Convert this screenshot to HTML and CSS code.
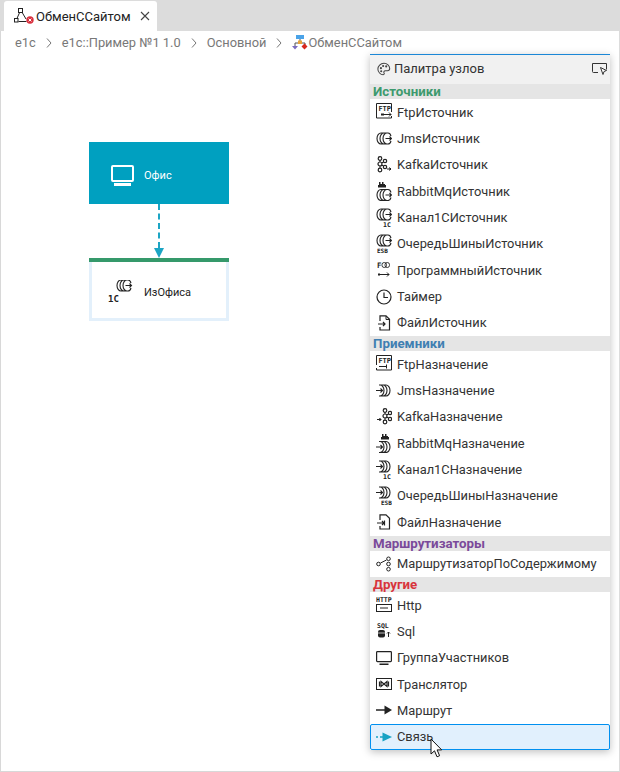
FILE: index.html
```html
<!DOCTYPE html>
<html lang="ru">
<head>
    <meta charset="UTF-8">
    <title>ОбменССайтом</title>
    <link rel="stylesheet" href="styles.css">
</head>
<body>
    <svg class="defs" width="0" height="0">
        <defs>
            <g id="coil-out" fill="none" stroke="#222" stroke-width="1.100">
                <path d="M5 2a4 5.500 0 0 0 0 11M8 2a4 5.500 0 0 0 0 11M11 2a4 5.500 0 0 0 0 11M5 2h7c1.500 0 2.500 1 3 3M5 13h7c1.500 0 2.500-1 3-3"/>
                <path d="M9.500 7.500h6M13.500 5.500l2 2-2 2"/>
            </g>
            <g id="coil-in" fill="none" stroke="#222" stroke-width="1.100">
                <path d="M10 2a4 5.500 0 0 1 0 11M7 2a4 5.500 0 0 1 0 11M4 2a4 5.500 0 0 1 0 11M3 2h7M3 13h7"/>
                <path d="M0 7.500h6.500M4.500 5.500l2 2-2 2"/>
            </g>
        </defs>
    </svg>

    <div class="window">
        <div class="tabbar">
            <div class="tab">
                <svg class="tab-icon" width="20" height="18" viewBox="0 0 20 18">
                    <path d="M6.500 3.500L2.500 12.500M7 3.500l5 8.500M4.500 14.500h8" fill="none" stroke="#222"/>
                    <rect x="4.500" y="1.500" width="4" height="4" fill="#fff" stroke="#222"/>
                    <rect x="0.500" y="11.500" width="3.500" height="3.500" fill="#fff" stroke="#222"/>
                    <circle cx="16" cy="13" r="3.700" fill="#d9303e"/>
                    <path d="M14.600 11.600l2.800 2.800M17.400 11.600l-2.800 2.800" stroke="#fff"/>
                </svg>
                <span>ОбменССайтом</span>
                <svg class="tab-close" width="10" height="10" viewBox="0 0 10 10">
                    <path d="M1 1l8 8M9 1l-8 8" stroke="#444" stroke-width="1.100"/>
                </svg>
            </div>
        </div>

        <div class="crumbs">
            <span>e1c</span>
            <svg class="crumb-sep" width="6" height="10" viewBox="0 0 6 10"><path d="M1 .5l4 4.500-4 4.500" fill="none" stroke="#777"/></svg>
            <span>e1c::Пример №1 1.0</span>
            <svg class="crumb-sep" width="6" height="10" viewBox="0 0 6 10"><path d="M1 .5l4 4.500-4 4.500" fill="none" stroke="#777"/></svg>
            <span>Основной</span>
            <svg class="crumb-sep" width="6" height="10" viewBox="0 0 6 10"><path d="M1 .5l4 4.500-4 4.500" fill="none" stroke="#777"/></svg>
            <svg class="crumb-icon" width="16" height="16" viewBox="0 0 16 16">
                <path d="M8 4v3M3 11V8h10v3" fill="none" stroke="#555"/>
                <rect x="4" y="0" width="8" height="4" fill="#4aa3e8"/>
                <rect x="6" y="5.500" width="4" height="3.500" fill="#e8a33a"/>
                <path d="M0 11h6L3 14.500z" fill="#7a6cc0"/>
                <path d="M12.500 8.500l3 3-3 3-3-3z" fill="#d8261c"/>
            </svg>
            <span class="crumb-last">ОбменССайтом</span>
        </div>

        <div class="canvas">
            <div class="node node-group">
                <svg class="node-icon" width="24" height="22" viewBox="0 0 24 22">
                    <rect x="1" y="1" width="21" height="15" rx="1" fill="none" stroke="#fff" stroke-width="2"/>
                    <rect x="3" y="18" width="17" height="3" fill="#fff"/>
                </svg>
                <span>Офис</span>
            </div>
            <div class="link">
                <div class="link-line"></div>
                <div class="link-head"></div>
            </div>
            <div class="node node-source">
                <svg class="node-icon" width="26" height="24" viewBox="0 0 26 24">
                    <use href="#coil-out" x="9" y="-2"/>
                    <text class="mini" x="1" y="22" font-size="9">1С</text>
                </svg>
                <span>ИзОфиса</span>
            </div>

            <div class="palette">
                <div class="palette-head">
                    <svg width="14" height="14" viewBox="0 0 16 16">
                        <path d="M8 1.500C4 1.500 1 4.500 1 8s3 6.500 6 6.500c1.500 0 1.500-1.500 1-2.200-.6-1 0-2.300 1.500-2.300h2.500c1.500 0 2.500-1 2.500-2.500 0-3.500-3-6-6.500-6z" fill="none" stroke="#444" stroke-width="1.200"/>
                        <circle cx="4.500" cy="7" r="1.200" fill="#444"/><circle cx="7" cy="4.500" r="1.200" fill="#444"/><circle cx="10.500" cy="5" r="1.200" fill="#444"/><circle cx="4.800" cy="10.500" r="1.200" fill="#444"/>
                    </svg>
                    <span class="palette-title">Палитра узлов</span>
                    <svg class="palette-pin" width="16" height="14" viewBox="0 0 16 14">
                        <path d="M6 10.500H1.500a1 1 0 0 1-1-1v-8h14v6" fill="none" stroke="#333"/>
                        <path d="M8.500 5.500l6 3-2.500 1-1 3z" fill="#fff" stroke="#333"/>
                    </svg>
                </div>

                <div class="group group-sources">Источники</div>
                <div class="item">
                    <svg width="16" height="18" viewBox="0 0 16 18"><path d="M15.500 9V.5H.5V15h15v-2" fill="none" stroke="#222"/><text class="mini" x="2.400" y="7.500" font-size="7">FTP</text><path d="M7 11.500h8M13 9.500l2 2-2 2" fill="none" stroke="#222"/><rect x="5" y="10.500" width="3" height="2" fill="#222"/></svg>
                    <span>FtpИсточник</span>
                </div>
                <div class="item">
                    <svg width="16" height="16" viewBox="0 0 16 16"><use href="#coil-out"/></svg>
                    <span>JmsИсточник</span>
                </div>
                <div class="item">
                    <svg width="16" height="18" viewBox="0 0 16 18"><path d="M4 3v11M4 8l5-3M4 8l5 3" stroke="#222" fill="none"/><circle cx="4" cy="2.500" r="1.800" fill="#fff" stroke="#222" stroke-width="1.200"/><circle cx="4" cy="8" r="2" fill="#fff" stroke="#222" stroke-width="1.200"/><circle cx="4" cy="14" r="1.800" fill="#fff" stroke="#222" stroke-width="1.200"/><circle cx="9" cy="5" r="1.700" fill="#fff" stroke="#222" stroke-width="1.200"/><circle cx="9" cy="11" r="1.700" fill="#fff" stroke="#222" stroke-width="1.200"/><path d="M11 13h4M13.500 11.500l1.500 1.500-1.500 1.500" fill="#222" stroke="#222"/></svg>
                    <span>KafkaИсточник</span>
                </div>
                <div class="item">
                    <svg width="16" height="20" viewBox="0 0 16 20"><path d="M3 6V1h1.500v2h1.500V1h1.500v2H9v3z" fill="#222"/><rect x="2" y="4" width="8" height="2.500" fill="#222"/><use href="#coil-out" y="6.500"/></svg>
                    <span>RabbitMqИсточник</span>
                </div>
                <div class="item">
                    <svg width="16" height="20" viewBox="0 0 16 20"><use href="#coil-out" y="-1"/><text class="mini" x="7" y="18.500" font-size="6.500">1С</text></svg>
                    <span>Канал1СИсточник</span>
                </div>
                <div class="item">
                    <svg width="16" height="20" viewBox="0 0 16 20"><use href="#coil-out" y="-1"/><text class="mini" x="1" y="18.500" font-size="6">ESB</text></svg>
                    <span>ОчередьШиныИсточник</span>
                </div>
                <div class="item">
                    <svg width="16" height="18" viewBox="0 0 16 18"><text class="mini" x="1" y="7" font-size="7.500">F</text><rect x="6" y="1.500" width="4.500" height="5" rx="2.200" fill="none" stroke="#222" stroke-width=".9"/><rect x="9" y="1.500" width="4.500" height="5" rx="2.200" fill="none" stroke="#222" stroke-width=".9"/><path d="M2 13.500h11M11 11.500l2 2-2 2" fill="none" stroke="#222"/><rect x="2" y="12.500" width="2" height="2" fill="#222"/></svg>
                    <span>ПрограммныйИсточник</span>
                </div>
                <div class="item">
                    <svg width="16" height="16" viewBox="0 0 16 16"><circle cx="8" cy="8" r="7" fill="none" stroke="#222" stroke-width="1.200"/><path d="M8 3.500V8.500h4" fill="none" stroke="#222" stroke-width="1.200"/></svg>
                    <span>Таймер</span>
                </div>
                <div class="item">
                    <svg width="16" height="16" viewBox="0 0 16 16"><path d="M4 6V.8h6l3.500 3.500V15H4v-3" fill="none" stroke="#222" stroke-width="1.200"/><path d="M10 1v3.500h3.500" fill="none" stroke="#222"/><path d="M2 9h7M7 7l2 2-2 2" fill="none" stroke="#222" stroke-width="1.200"/></svg>
                    <span>ФайлИсточник</span>
                </div>

                <div class="group group-targets">Приемники</div>
                <div class="item">
                    <svg width="16" height="18" viewBox="0 0 16 18"><path d="M.5 10V.5h15V15H.5v-2" fill="none" stroke="#222"/><text class="mini" x="2.400" y="7.500" font-size="7">FTP</text><path d="M3 11.500h7M10.500 9.500v4" fill="none" stroke="#222"/></svg>
                    <span>FtpНазначение</span>
                </div>
                <div class="item">
                    <svg width="16" height="16" viewBox="0 0 16 16"><use href="#coil-in"/></svg>
                    <span>JmsНазначение</span>
                </div>
                <div class="item">
                    <svg width="16" height="18" viewBox="0 0 16 18"><path d="M9 3v11M9 8l5-3M9 8l5 3" stroke="#222" fill="none"/><circle cx="9" cy="2.500" r="1.800" fill="#fff" stroke="#222" stroke-width="1.200"/><circle cx="9" cy="8" r="2" fill="#fff" stroke="#222" stroke-width="1.200"/><circle cx="9" cy="14" r="1.800" fill="#fff" stroke="#222" stroke-width="1.200"/><circle cx="14" cy="5" r="1.700" fill="#fff" stroke="#222" stroke-width="1.200"/><circle cx="14" cy="11" r="1.700" fill="#fff" stroke="#222" stroke-width="1.200"/><path d="M1 11.500h4M3.500 10L5 11.500 3.500 13" fill="#222" stroke="#222"/></svg>
                    <span>KafkaНазначение</span>
                </div>
                <div class="item">
                    <svg width="16" height="20" viewBox="0 0 16 20"><path d="M6 6V1h1.500v2H9V1h1.500v2H12v3z" fill="#222"/><rect x="5" y="4" width="8" height="2.500" fill="#222"/><use href="#coil-in" y="6.500"/></svg>
                    <span>RabbitMqНазначение</span>
                </div>
                <div class="item">
                    <svg width="16" height="20" viewBox="0 0 16 20"><use href="#coil-in" y="-1"/><text class="mini" x="7" y="18.500" font-size="6.500">1С</text></svg>
                    <span>Канал1СНазначение</span>
                </div>
                <div class="item">
                    <svg width="16" height="20" viewBox="0 0 16 20"><use href="#coil-in" y="-1"/><text class="mini" x="5" y="18.500" font-size="6">ESB</text></svg>
                    <span>ОчередьШиныНазначение</span>
                </div>
                <div class="item">
                    <svg width="16" height="16" viewBox="0 0 16 16"><path d="M4 6V.8h6l3.500 3.500V15H4v-3" fill="none" stroke="#222" stroke-width="1.200"/><path d="M1 9h7M6 7l2 2-2 2" fill="none" stroke="#222" stroke-width="1.200"/><path d="M8.500 6.500v5" stroke="#222" stroke-width="1.200"/></svg>
                    <span>ФайлНазначение</span>
                </div>

                <div class="group group-routers">Маршрутизаторы</div>
                <div class="item">
                    <svg width="16" height="16" viewBox="0 0 16 16"><circle cx="2.500" cy="8" r="1.800" fill="none" stroke="#222"/><circle cx="12.500" cy="2.800" r="1.800" fill="none" stroke="#222"/><circle cx="12.500" cy="8" r="1.800" fill="none" stroke="#222"/><circle cx="12.500" cy="13.200" r="1.800" fill="none" stroke="#222"/><path d="M4.500 7l6-3" stroke="#222"/></svg>
                    <span>МаршрутизаторПоСодержимому</span>
                </div>

                <div class="group group-other">Другие</div>
                <div class="item">
                    <svg width="16" height="18" viewBox="0 0 16 18"><text class="mini" x="0" y="6" font-size="6.500">HTTP</text><rect x=".5" y="8.500" width="15" height="7" fill="none" stroke="#222"/><path d="M4 12h8" stroke="#222"/></svg>
                    <span>Http</span>
                </div>
                <div class="item">
                    <svg width="16" height="18" viewBox="0 0 16 18"><text class="mini" x="1" y="6" font-size="6.500">SQL</text><rect x="2" y="8" width="7" height="7.500" rx="2" fill="#222"/><path d="M2 11h7" stroke="#fff" stroke-width=".7"/><path d="M12.500 15v-5M11 11.500l1.500-1.500 1.500 1.500" fill="none" stroke="#222"/></svg>
                    <span>Sql</span>
                </div>
                <div class="item">
                    <svg width="16" height="16" viewBox="0 0 16 16"><rect x=".6" y="1.600" width="14.800" height="10" rx=".8" fill="none" stroke="#222" stroke-width="1.200"/><rect x="3.500" y="13.500" width="9" height="1.500" fill="#222"/></svg>
                    <span>ГруппаУчастников</span>
                </div>
                <div class="item">
                    <svg width="16" height="14" viewBox="0 0 16 14"><rect x=".5" y="1.500" width="15" height="11" fill="none" stroke="#222"/><path d="M3.500 4.500v5M12.500 4.500v5M5 4.500L8 7 5 9.500zM11 4.500L8 7l3 2.500z" fill="none" stroke="#222" stroke-width="1.200"/></svg>
                    <span>Транслятор</span>
                </div>
                <div class="item">
                    <svg width="16" height="12" viewBox="0 0 16 12"><path d="M0 6h10" stroke="#222" stroke-width="1.500"/><path d="M8.500 1.500L16 6l-7.500 4.500z" fill="#222"/></svg>
                    <span>Маршрут</span>
                </div>
                <div class="item item-active">
                    <svg width="16" height="12" viewBox="0 0 16 12"><path d="M0 6h2M4 6h3" stroke="#17a2c4" stroke-width="1.500"/><path d="M6.500 1.500L16 6l-9.500 4.500z" fill="#17a2c4"/></svg>
                    <span>Связь</span>
                </div>
                <svg class="cursor" width="14" height="21" viewBox="0 0 14 21">
                    <path d="M1 1v15l3.500-3.200 2.500 6 2.600-1.100-2.500-5.800h4.600z" fill="#fff" stroke="#111"/>
                </svg>
            </div>
        </div>
    </div>
</body>
</html>
```

FILE: styles.css
```css
* {
    box-sizing: border-box;
    margin: 0;
    padding: 0;
}

html, body {
    height: 100%;
}

body {
    font-family: Roboto, "Liberation Sans", sans-serif;
    font-size: 13px;
    color: #333;
    background-color: #fff;
}

.defs {
    position: absolute;
}

.window {
    display: flex;
    flex-direction: column;
    height: 772px;
    width: 620px;
    border-right: 1px solid #dcdcdc;
    border-bottom: 1px solid #d8d8d8;
    border-left: 1px solid #d8d8d8;
}

.tabbar {
    flex: none;
    display: flex;
    align-items: flex-end;
    height: 31px;
    margin: 0 -1px 0 -1px;
    padding-left: 4px;
    background-color: #dcdcdc;
}

.tab {
    display: flex;
    align-items: center;
    width: 153px;
    height: 30px;
    padding-left: 10px;
    color: #222;
    background-color: #fff;
    border-radius: 3px 3px 0 0;
}

.tab-icon {
    margin-right: 2px;
}

.tab-close {
    margin-left: 9px;
}

.crumbs {
    flex: none;
    display: flex;
    align-items: center;
    height: 23px;
    padding-left: 14px;
    font-size: 12.85px;
    color: #787878;
}

.crumb-sep {
    margin: 0 10px;
}

.canvas {
    position: relative;
    flex: 1;
    padding: 88px 0 0 88px;
}

.node {
    display: flex;
    align-items: center;
    width: 140px;
    font-size: 11px;
}

.node span {
    margin-left: 9px;
}

.node-icon {
    flex: none;
}

.node-group {
    height: 62px;
    padding-top: 5px;
    padding-left: 22px;
    color: #fff;
    background-color: #00a0c0;
}

.node-source {
    height: 63px;
    padding-top: 1px;
    padding-left: 18px;
    color: #222;
    background-color: #fff;
    border-top: 4px solid #35996b;
    box-shadow: inset 3px 0 #e3f0fb, inset -3px 0 #e3f0fb, inset 0 -3px #e3f0fb;
}

.node-source span {
    margin-left: 11px;
}

.link {
    display: flex;
    flex-direction: column;
    align-items: center;
    width: 140px;
    height: 54px;
}

.link-line {
    flex: 1;
    border-left: 2px dashed #1ca5c4;
}

.link-head {
    width: 0;
    height: 0;
    border-left: 5px solid transparent;
    border-right: 5px solid transparent;
    border-top: 10px solid #1ca5c4;
}

.palette {
    position: absolute;
    top: 0;
    left: 369px;
    width: 240px;
    background-color: #fff;
    border-top: 1px solid #1b87d6;
    box-shadow: 0 2px 8px rgba(0,0,0,0.25);
}

.palette-head {
    display: flex;
    align-items: center;
    gap: 3px;
    height: 29px;
    padding: 0 2px 2px 7px;
    background-color: #f1f1f1;
}

.palette-title {
    flex: 1;
}

.palette-pin {
    flex: none;
}

.group {
    height: 15px;
    padding-left: 3px;
    font-size: 13.3px;
    font-weight: 700;
    line-height: 15px;
    background-color: #e5e5e5;
}

.group-sources { color: #3d9a6e; }
.group-targets { color: #3f7fb2; }
.group-routers { color: #7a4a9a; }
.group-other { color: #d8343c; }

.item {
    display: flex;
    align-items: center;
    gap: 5px;
    height: 26.35px;
    padding-left: 5px;
    border: 1px solid transparent;
    font-size: 12.85px;
    color: #333;
}

.item svg {
    flex: none;
}

.item-active {
    background-color: #e1f0fd;
    border-color: #0090f0;
    border-radius: 2px;
}

.mini {
    font-family: "DejaVu Sans Mono", monospace;
    font-weight: 700;
    fill: #222;
}

.cursor {
    position: absolute;
    left: 60px;
    bottom: -9px;
}
```
